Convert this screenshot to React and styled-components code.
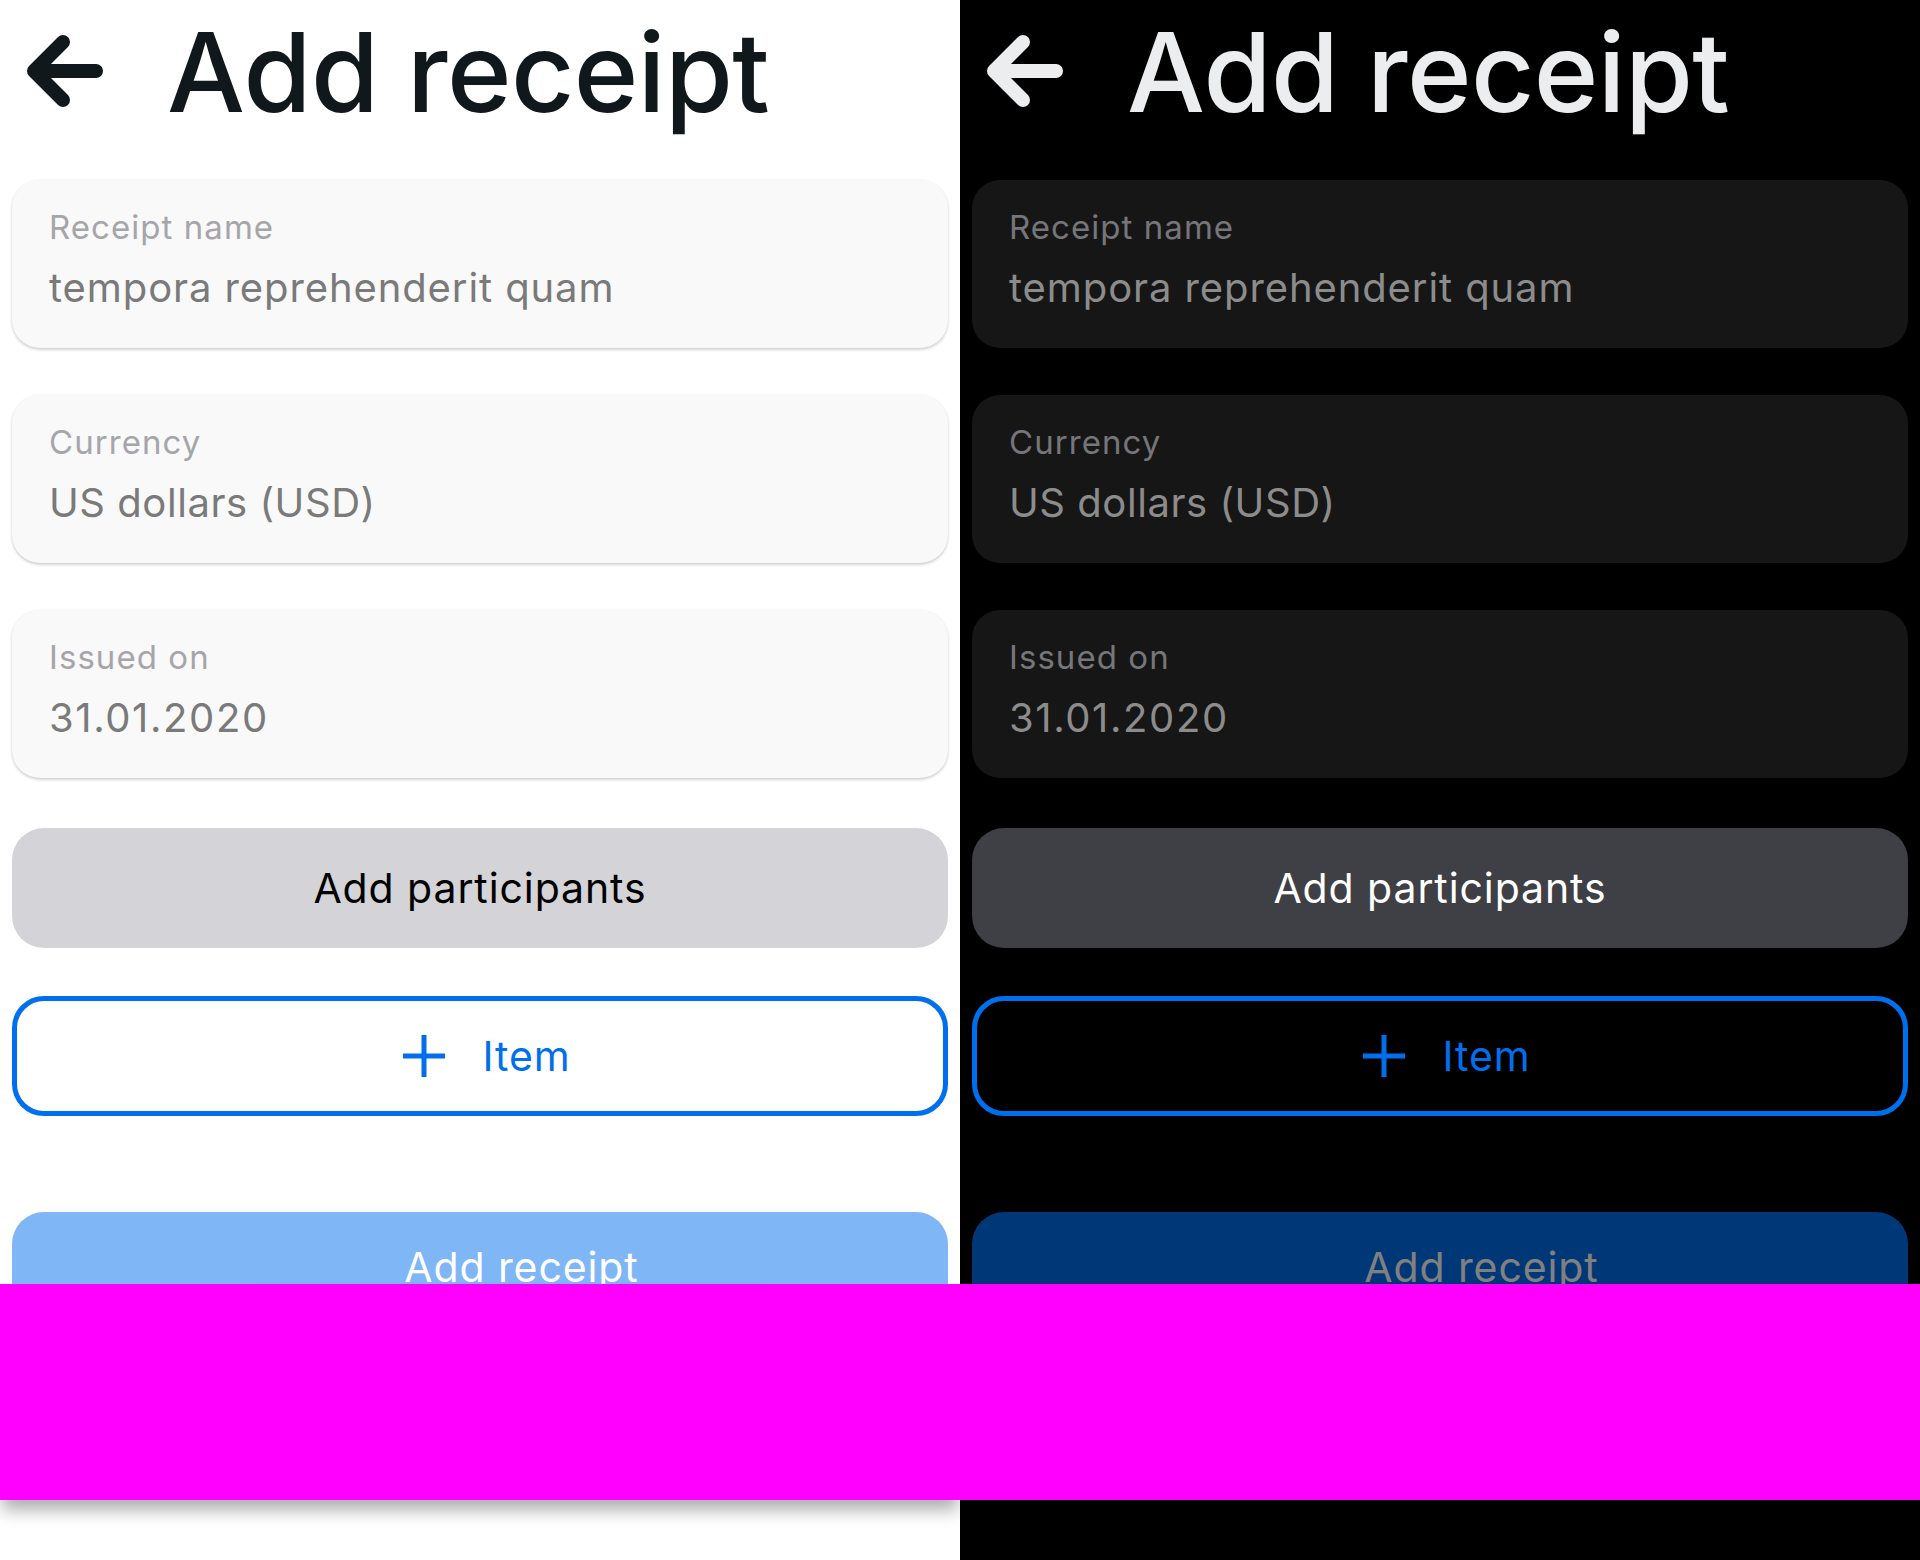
import React from "react";
import styled, { createGlobalStyle, css } from "styled-components";

const GlobalStyle = createGlobalStyle`
  html, body { margin: 0; padding: 0; }
  body { font-family: Inter, "Noto Sans", sans-serif; }
  * { box-sizing: border-box; }
`;

const themes = {
  light: {
    bg: "#ffffff",
    fg: "#11181c",
    card: "#f9f9f9",
    cardShadow: "0 2px 3px rgba(0,0,0,0.16), 0 0 3px rgba(0,0,0,0.06)",
    label: "#a5a5aa",
    value: "#7a7a7a",
    btn: "#d4d4d8",
    btnFg: "#000000",
    primary: "#006fee",
    maskShadow: "0 12px 16px -2px rgba(0,0,0,0.32)",
  },
  dark: {
    bg: "#000000",
    fg: "#ecedee",
    card: "#161616",
    cardShadow: "none",
    label: "#76767a",
    value: "#8c8c8c",
    btn: "#3f3f46",
    btnFg: "#ffffff",
    primary: "#006fee",
    maskShadow: "none",
  },
};

const Page = styled.div`
  display: grid;
  grid-template-columns: 960px 960px;
  width: 1920px;
  height: 1560px;
`;

const Screen = styled.div`
  position: relative;
  overflow: hidden;
  height: 1560px;
  background: ${(p) => p.$t.bg};
  color: ${(p) => p.$t.fg};
  display: flex;
  flex-direction: column;
  padding: 0 12px;
`;

const Header = styled.header`
  display: flex;
  align-items: center;
  height: 137px;
  padding-top: 7px;
`;

const BackIcon = styled.svg`
  width: 90px;
  height: 82px;
  margin-left: 8px;
  margin-top: -2px;
  flex: none;
`;

const Title = styled.h1`
  margin: 0 0 0 57px;
  font-family: Inter, sans-serif;
  font-weight: 500;
  font-size: 110px;
  line-height: 130px;
  letter-spacing: -0.6px;
  color: ${(p) => p.$t.fg};
`;

const Form = styled.div`
  display: flex;
  flex-direction: column;
  margin-top: 43px;
`;

const Field = styled.div`
  height: 168px;
  border-radius: 28px;
  background: ${(p) => p.$t.card};
  box-shadow: ${(p) => p.$t.cardShadow};
  padding: 27px 37px 0;
  display: flex;
  flex-direction: column;
  & + & {
    margin-top: 47px;
  }
`;

const Label = styled.span`
  font-size: 33px;
  line-height: 40px;
  letter-spacing: 1.05px;
  color: ${(p) => p.$t.label};
`;

const Value = styled.span`
  margin-top: 17px;
  font-size: 40px;
  line-height: 48px;
  letter-spacing: ${(p) => p.$spacing ?? 0.9}px;
  color: ${(p) => p.$t.value};
`;

const buttonBase = css`
  width: 100%;
  height: 120px;
  border-radius: 32px;
  display: flex;
  align-items: center;
  justify-content: center;
  font-family: Inter, sans-serif;
  font-size: 41px;
  letter-spacing: 0.9px;
  font-weight: 400;
  cursor: pointer;
`;

const DefaultButton = styled.button`
  ${buttonBase}
  margin-top: 50px;
  border: none;
  background: ${(p) => p.$t.btn};
  color: ${(p) => p.$t.btnFg};
`;

const OutlineButton = styled.button`
  ${buttonBase}
  margin-top: 48px;
  border: 5px solid ${(p) => p.$t.primary};
  background: transparent;
  color: ${(p) => p.$t.primary};
  gap: 37px;
  padding-left: 20px;
`;

const PlusIcon = styled.svg`
  width: 42px;
  height: 42px;
  flex: none;
`;

const PrimaryButton = styled.button`
  ${buttonBase}
  margin-top: 96px;
  border: none;
  background: ${(p) => p.$t.primary};
  color: #ffffff;
  opacity: 0.5;
  padding-left: 89px;
  padding-bottom: 12px;
`;

const Mask = styled.div`
  position: absolute;
  left: 0;
  right: 0;
  top: 1284px;
  height: 216px;
  background: #ff00ff;
  box-shadow: ${(p) => p.$t.maskShadow};
`;

function Panel({ mode }) {
  const t = themes[mode];
  return (
    <Screen $t={t}>
      <Header>
        <BackIcon viewBox="0 0 90 82" fill="none">
          <path
            d="M43 12 L14 41 L43 70 M14 41 H76"
            stroke={t.fg}
            strokeWidth="14"
            strokeLinecap="round"
            strokeLinejoin="round"
          />
        </BackIcon>
        <Title $t={t}>Add receipt</Title>
      </Header>
      <Form>
        <Field $t={t}>
          <Label $t={t}>Receipt name</Label>
          <Value $t={t}>tempora reprehenderit quam</Value>
        </Field>
        <Field $t={t}>
          <Label $t={t}>Currency</Label>
          <Value $t={t} $spacing={0.55}>US dollars (USD)</Value>
        </Field>
        <Field $t={t}>
          <Label $t={t}>Issued on</Label>
          <Value $t={t} $spacing={1.6}>31.01.2020</Value>
        </Field>
      </Form>
      <DefaultButton $t={t}>Add participants</DefaultButton>
      <OutlineButton $t={t}>
        <PlusIcon viewBox="0 0 42 42">
          <path d="M21 0 V42 M0 21 H42" stroke={t.primary} strokeWidth="5" />
        </PlusIcon>
        Item
      </OutlineButton>
      <PrimaryButton $t={t} disabled>
        Add receipt
      </PrimaryButton>
      <Mask $t={t} />
    </Screen>
  );
}

export default function App() {
  return (
    <>
      <GlobalStyle />
      <Page>
        <Panel mode="light" />
        <Panel mode="dark" />
      </Page>
    </>
  );
}
